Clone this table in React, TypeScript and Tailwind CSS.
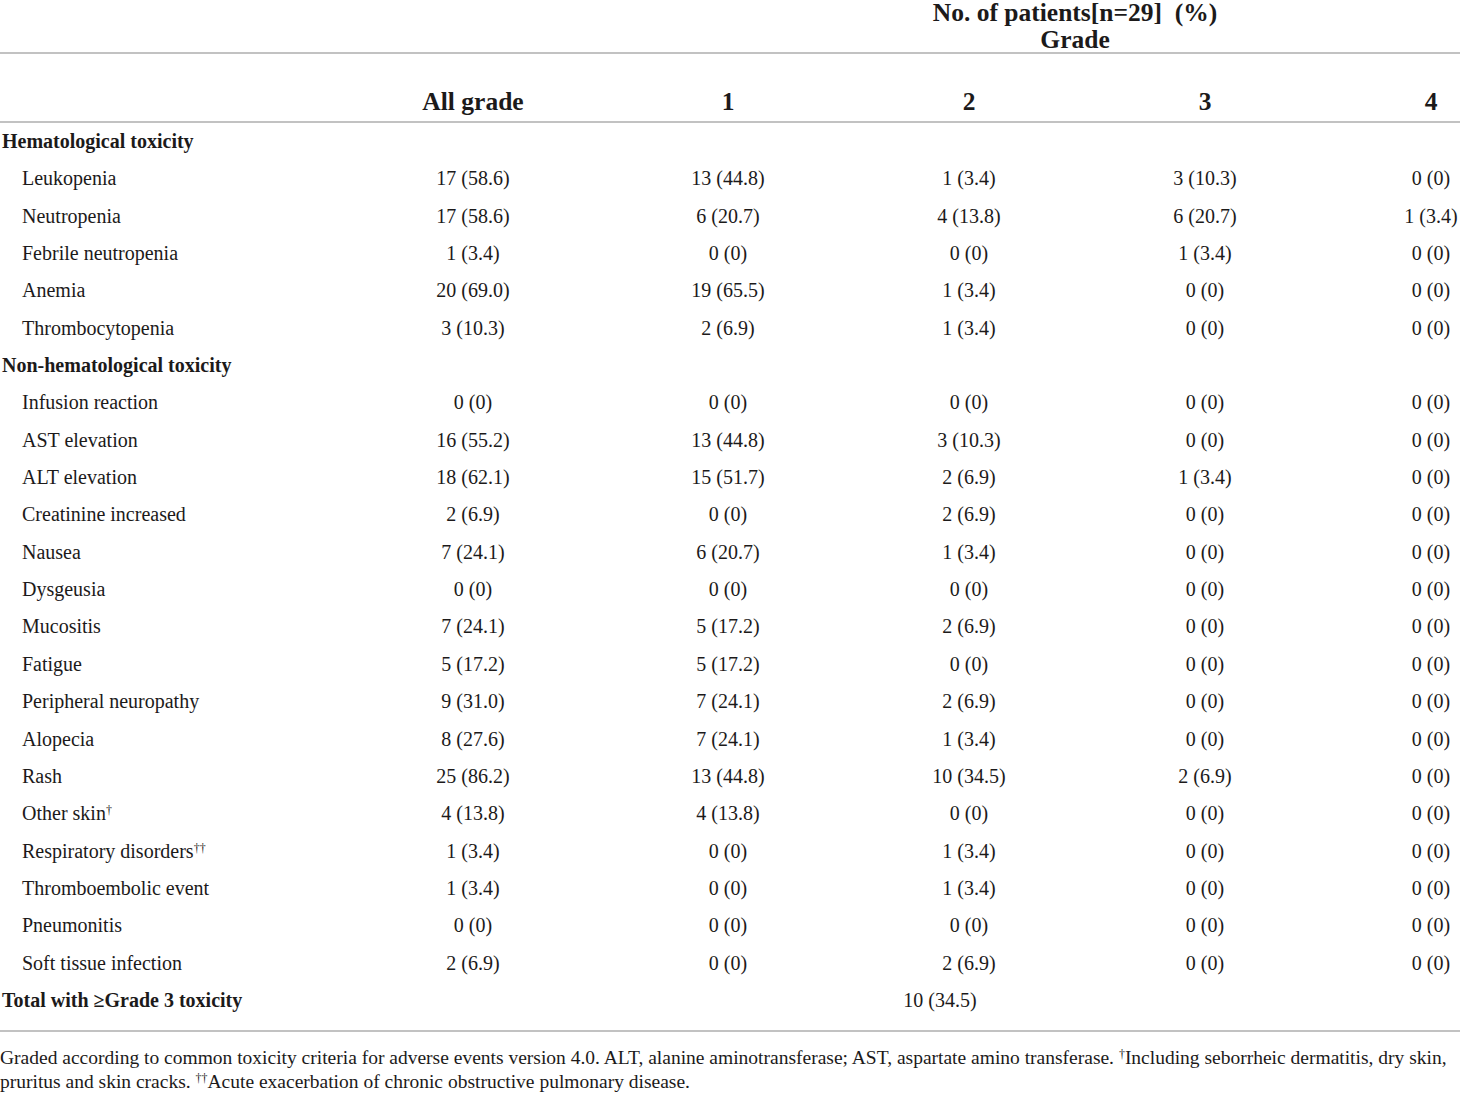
import React from "react";

type Row = { label: React.ReactNode; vals?: string[]; section?: boolean };

const Sup = ({ children }: { children: React.ReactNode }) => (
  <sup className="text-[12px] leading-none">{children}</sup>
);

const rows: Row[] = [
  { label: "Hematological toxicity", section: true },
  { label: "Leukopenia", vals: ["17 (58.6)", "13 (44.8)", "1 (3.4)", "3 (10.3)", "0 (0)"] },
  { label: "Neutropenia", vals: ["17 (58.6)", "6 (20.7)", "4 (13.8)", "6 (20.7)", "1 (3.4)"] },
  { label: "Febrile neutropenia", vals: ["1 (3.4)", "0 (0)", "0 (0)", "1 (3.4)", "0 (0)"] },
  { label: "Anemia", vals: ["20 (69.0)", "19 (65.5)", "1 (3.4)", "0 (0)", "0 (0)"] },
  { label: "Thrombocytopenia", vals: ["3 (10.3)", "2 (6.9)", "1 (3.4)", "0 (0)", "0 (0)"] },
  { label: "Non-hematological toxicity", section: true },
  { label: "Infusion reaction", vals: ["0 (0)", "0 (0)", "0 (0)", "0 (0)", "0 (0)"] },
  { label: "AST elevation", vals: ["16 (55.2)", "13 (44.8)", "3 (10.3)", "0 (0)", "0 (0)"] },
  { label: "ALT elevation", vals: ["18 (62.1)", "15 (51.7)", "2 (6.9)", "1 (3.4)", "0 (0)"] },
  { label: "Creatinine increased", vals: ["2 (6.9)", "0 (0)", "2 (6.9)", "0 (0)", "0 (0)"] },
  { label: "Nausea", vals: ["7 (24.1)", "6 (20.7)", "1 (3.4)", "0 (0)", "0 (0)"] },
  { label: "Dysgeusia", vals: ["0 (0)", "0 (0)", "0 (0)", "0 (0)", "0 (0)"] },
  { label: "Mucositis", vals: ["7 (24.1)", "5 (17.2)", "2 (6.9)", "0 (0)", "0 (0)"] },
  { label: "Fatigue", vals: ["5 (17.2)", "5 (17.2)", "0 (0)", "0 (0)", "0 (0)"] },
  { label: "Peripheral neuropathy", vals: ["9 (31.0)", "7 (24.1)", "2 (6.9)", "0 (0)", "0 (0)"] },
  { label: "Alopecia", vals: ["8 (27.6)", "7 (24.1)", "1 (3.4)", "0 (0)", "0 (0)"] },
  { label: "Rash", vals: ["25 (86.2)", "13 (44.8)", "10 (34.5)", "2 (6.9)", "0 (0)"] },
  {
    label: (
      <>
        Other skin<Sup>†</Sup>
      </>
    ),
    vals: ["4 (13.8)", "4 (13.8)", "0 (0)", "0 (0)", "0 (0)"],
  },
  {
    label: (
      <>
        Respiratory disorders<Sup>††</Sup>
      </>
    ),
    vals: ["1 (3.4)", "0 (0)", "1 (3.4)", "0 (0)", "0 (0)"],
  },
  { label: "Thromboembolic event", vals: ["1 (3.4)", "0 (0)", "1 (3.4)", "0 (0)", "0 (0)"] },
  { label: "Pneumonitis", vals: ["0 (0)", "0 (0)", "0 (0)", "0 (0)", "0 (0)"] },
  { label: "Soft tissue infection", vals: ["2 (6.9)", "0 (0)", "2 (6.9)", "0 (0)", "0 (0)"] },
];

const grid = "grid grid-cols-[350px_246px_264px_218px_254px_128px]";

export default function App() {
  return (
    <div className="w-[1460px] bg-white text-[#1c1a1a] font-['Liberation_Serif','Times_New_Roman',serif]">
      {/* top header */}
      <div className="flex h-[54px] border-b-2 border-[#c2c2c2]">
        <div className="w-[690px]" />
        <div className="flex-1 text-center font-bold text-[25.5px] leading-[27px]">
          <div className="-mt-[1px]">No. of patients[n=29]&nbsp; (%)</div>
          <div>Grade</div>
        </div>
      </div>
      {/* column header */}
      <div className={`${grid} h-[69px] border-b-2 border-[#c2c2c2] font-bold text-[25.5px] leading-[28px] pt-[34px]`}>
        <div />
        <div className="text-center">All grade</div>
        <div className="text-center">1</div>
        <div className="text-center">2</div>
        <div className="text-center">3</div>
        <div className="text-center pl-[70px]">4</div>
      </div>
      {/* body */}
      <div className="text-[20px] leading-[32px] pt-[2px]">
        {rows.map((r, i) => (
          <div key={i} className={`${grid} h-[37.35px]`}>
            {r.section ? (
              <div className="pl-[2px] font-bold col-span-6 whitespace-nowrap">{r.label}</div>
            ) : (
              <>
                <div className="pl-[22px] whitespace-nowrap">{r.label}</div>
                {r.vals!.map((v, j) => (
                  <div key={j} className={`text-center whitespace-nowrap ${j === 4 ? "pl-[70px]" : ""}`}>
                    {v}
                  </div>
                ))}
              </>
            )}
          </div>
        ))}
        <div className={`${grid} h-[48px] border-b-2 border-[#c2c2c2]`}>
          <div className="pl-[2px] font-bold whitespace-nowrap">Total with ≥Grade 3 toxicity</div>
          <div className="col-span-5 text-center pl-[70px]">10 (34.5)</div>
        </div>
      </div>
      {/* footnote */}
      <div className="pt-[14px] pb-[4px] text-[19.5px] leading-[24px]">
        Graded according to common toxicity criteria for adverse events version 4.0. ALT, alanine aminotransferase; AST,
        aspartate amino transferase. <Sup>†</Sup>Including seborrheic dermatitis, dry skin, pruritus and skin cracks.{" "}
        <Sup>††</Sup>Acute exacerbation of chronic obstructive pulmonary disease.
      </div>
    </div>
  );
}
